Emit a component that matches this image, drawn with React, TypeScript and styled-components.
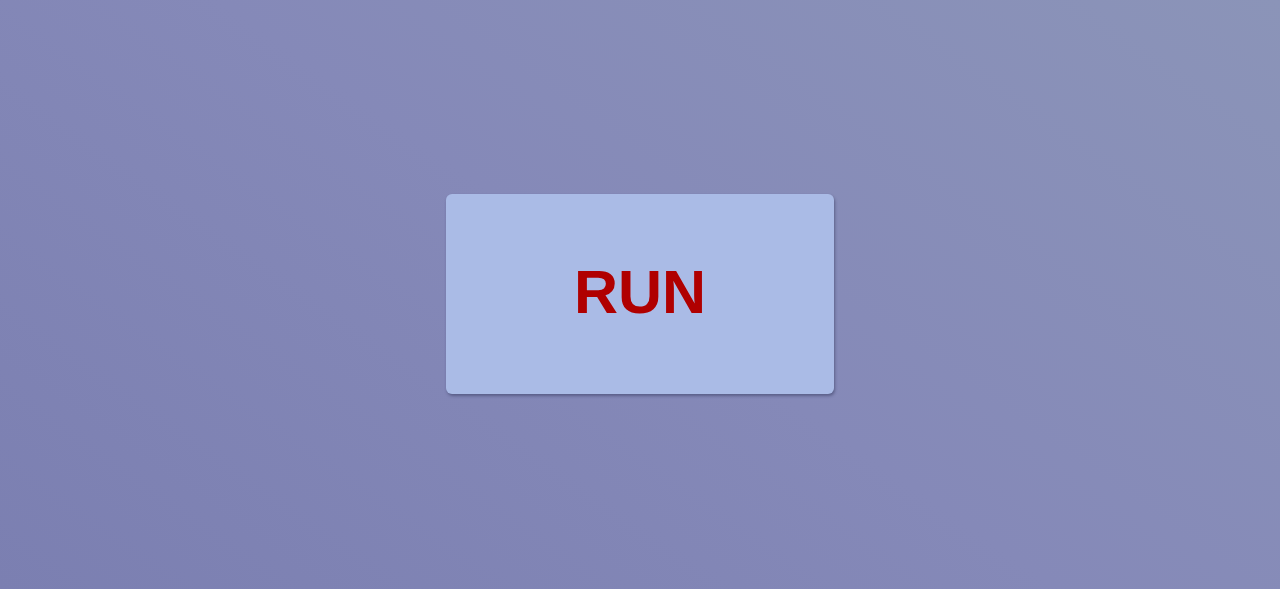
import React from "react";
import styled, { createGlobalStyle } from "styled-components";

const GlobalStyle = createGlobalStyle`
    html, body, #root {
        margin: 0;
        height: 100%;
    }
    body {
        font-family: "Liberation Sans", Arial, sans-serif;
    }
`;

const Page = styled.div`
    display: flex;
    align-items: center;
    justify-content: center;
    height: 100vh;
    background: linear-gradient(35deg, #7b7fb1 0%, #8589b8 50%, #8b94b8 100%);
`;

const RunButton = styled.button`
    display: flex;
    align-items: center;
    justify-content: center;
    width: 388px;
    height: 200px;
    margin-top: -1px;
    padding: 0 0 4px 0;
    border: none;
    border-radius: 6px;
    background: #aabbe6;
    box-shadow: 1px 2px 3px rgba(40, 45, 80, 0.45);
    color: #b00000;
    font-family: "Liberation Sans", Arial, sans-serif;
    font-size: 61px;
    font-weight: bold;
    cursor: pointer;
`;

const App = () => {
    return (
        <>
            <GlobalStyle />
            <Page>
                <RunButton>RUN</RunButton>
            </Page>
        </>
    );
};

export default App;
